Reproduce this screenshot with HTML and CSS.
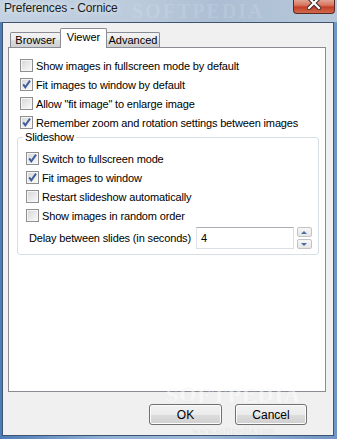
FILE: index.html
```html
<!DOCTYPE html>
<html lang="en">
<head>
  <meta charset="UTF-8" />
  <meta name="viewport" content="width=device-width, initial-scale=1.0" />
  <title>Preferences - Cornice</title>
  <link rel="stylesheet" href="styles.css">
</head>
<body>
  <div class="window">
    <div class="titlebar">
      <span class="title">Preferences - Cornice</span>
      <span class="close">
        <svg width="14" height="10" viewBox="0 0 14 10">
          <path d="M2 -2 L12 8 M12 -2 L2 8" stroke="#3a2a28" stroke-width="4.2" stroke-linecap="square"/>
          <path d="M2 -2 L12 8 M12 -2 L2 8" stroke="#fff" stroke-width="2.2" stroke-linecap="square"/>
        </svg>
      </span>
    </div>

    <div class="client">
      <div class="tabs">
        <div class="tab tab-browser">Browser</div>
        <div class="tab tab-viewer active">Viewer</div>
        <div class="tab tab-advanced">Advanced</div>
      </div>

      <div class="panel">
        <label class="check"><span class="cb"></span>Show images in fullscreen mode by default</label>
        <label class="check"><span class="cb on"></span>Fit images to window by default</label>
        <label class="check"><span class="cb"></span>Allow "fit image" to enlarge image</label>
        <label class="check"><span class="cb on"></span>Remember zoom and rotation settings between images</label>

        <fieldset class="group">
          <legend>Slideshow</legend>
          <label class="check"><span class="cb on"></span>Switch to fullscreen mode</label>
          <label class="check"><span class="cb on"></span>Fit images to window</label>
          <label class="check"><span class="cb"></span>Restart slideshow automatically</label>
          <label class="check"><span class="cb"></span>Show images in random order</label>
          <div class="delay">
            <span class="delay-label">Delay between slides (in seconds)</span>
            <span class="field">4</span>
            <span class="spin">
              <span class="spin-btn"><span class="tri up"></span></span>
              <span class="spin-btn"><span class="tri down"></span></span>
            </span>
          </div>
        </fieldset>
      </div>

      <div class="buttons">
        <button class="btn">OK</button>
        <button class="btn">Cancel</button>
      </div>
    </div>

    <div class="wm wm-top">SOFTPEDIA</div>
    <div class="wm wm-bottom">SOFTPEDIA</div>
    <div class="wm wm-url">www.softpedia.com</div>
  </div>
</body>
</html>
```

FILE: styles.css
```css
html    { -webkit-text-size-adjust: 100%; text-size-adjust: 100%; }
body    { margin: 0; font-family: "Liberation Sans", Arial, sans-serif; font-size: 11px; color: #000; }

.window {
  position: relative; width: 337px; height: 439px; box-sizing: border-box;
  display: flex; flex-direction: column; overflow: hidden;
  background: linear-gradient(to right, #4d7cb6, #8fb0d6 30%, #9db8d6 60%, #6f96c6);
}

/* title bar (glass) */
.titlebar {
  height: 22px; flex: none; display: flex; align-items: flex-start;
  background: linear-gradient(to right, #c3d2e2, #bccbdc 40%, #acbed3 65%, #b7c8da);
}
.title {
  padding-left: 4px; line-height: 16px; font-size: 12px; letter-spacing: -0.15px;
  color: #1b1b1b; text-shadow: 0 0 6px rgba(255,255,255,.9);
}
.close {
  margin-left: auto; margin-right: 2px; width: 40px; height: 13px;
  border: 1px solid #5a2a22; border-top: none; border-radius: 0 0 4px 4px;
  background: linear-gradient(#e3a392 0, #d67560 40%, #c63e27 55%, #cf6a4c 100%);
  display: flex; justify-content: center; align-items: flex-start;
}

/* client area */
.client {
  flex: 1; margin: 0 3px 3px 2px;
  border: 1px solid #3e5470; background: #f0f0f0;
  display: flex; flex-direction: column;
}

.tabs   { display: flex; align-items: flex-end; height: 19px; margin-top: 5px; padding-left: 7px; }
.tab    {
  box-sizing: border-box; height: 15px; line-height: 14px; text-align: center;
  border: 1px solid #898c95; border-bottom: none; border-radius: 2px 2px 0 0;
  background: linear-gradient(#f3f3f3, #ebebeb 50%, #dddddd 51%, #cfcfcf);
}
.tab-browser  { width: 51px; }
.tab-viewer   { width: 47px; margin-left: -1px; }
.tab-advanced { width: 54px; margin-left: -1px; }
.tab.active {
  height: 20px; margin-bottom: -1px; line-height: 16px;
  background: #fff; position: relative; z-index: 1;
}

.panel  {
  box-sizing: border-box; height: 345px; margin: 0 7px 0 5px; padding: 8px 6px 0 8px;
  border: 1px solid #898c95; background: #fff;
}

/* checkboxes */
.check  { display: flex; align-items: center; gap: 3px; height: 19px; padding-left: 3px; letter-spacing: -0.15px; }
.cb     {
  box-sizing: border-box; width: 13px; height: 13px; flex: none;
  border: 1px solid #8f8f8f; box-shadow: inset 0 0 0 1px #f6f6f6;
  background: linear-gradient(135deg, #d3d5d8, #f0f0f0 70%, #fbfbfb);
}
.cb.on  {
  background:
    url("data:image/svg+xml;utf8,<svg xmlns='http://www.w3.org/2000/svg' width='11' height='11'><path d='M2.2 5.4 L4.3 8.4 L9 1.6' fill='none' stroke='%23405c9a' stroke-width='1.9'/></svg>") center / 11px 11px no-repeat,
    linear-gradient(135deg, #d3d5d8, #f0f0f0 70%, #fbfbfb);
}

/* slideshow group */
.group  {
  margin: -1px 0 0 0; padding: 5px 0 5px 8px;
  border: 1px solid #d5dfe5; border-radius: 3px;
}
.group legend { padding: 0 2px; margin-left: -3px; line-height: 13px; letter-spacing: -0.15px; }
.group .check { padding-left: 0; }

.delay  { display: flex; align-items: center; height: 22px; margin-top: 2px; padding-left: 3px; letter-spacing: -0.15px; }
.field  {
  box-sizing: border-box; width: 98px; height: 22px; margin-left: 5px; padding-left: 4px; line-height: 20px;
  border: 1px solid #dbdfe6; border-top-color: #abadb3; border-left-color: #e2e3ea;
  background: #fff;
}
.spin   { display: flex; flex-direction: column; gap: 2px; margin-left: 3px; }
.spin-btn {
  box-sizing: border-box; width: 15px; height: 10px;
  border: 1px solid #c3c3c3; border-radius: 2px;
  background: linear-gradient(#f6f6f6, #e6e6e6);
  display: flex; justify-content: center; align-items: center;
}
.tri    { width: 0; height: 0; border-left: 3px solid transparent; border-right: 3px solid transparent; }
.tri.up   { border-bottom: 3px solid #4b6aa3; }
.tri.down { border-top: 3px solid #4b6aa3; }

/* dialog buttons */
.buttons { display: flex; justify-content: flex-end; gap: 13px; margin-top: 12px; padding-right: 26px; }
.btn    {
  box-sizing: border-box; width: 73px; height: 21px; padding: 0;
  font: inherit; font-size: 12px; color: #000;
  border: 1px solid #707070; border-radius: 3px;
  background: linear-gradient(#f2f2f2, #ebebeb 50%, #dddddd 51%, #cfcfcf);
  box-shadow: inset 0 0 0 1px #fcfcfc;
}
.btn + .btn { width: 72px; }

/* watermark */
.wm     { position: absolute; font-family: "Liberation Serif", serif; font-weight: bold; pointer-events: none; }
.wm-top { left: 132px; top: 0; font-size: 20px; line-height: 22px; letter-spacing: 2px; color: rgba(255,255,255,.12); }
.wm-bottom { left: 166px; top: 382px; font-size: 22px; letter-spacing: 1px;
  color: rgba(255,255,255,.5); -webkit-text-stroke: 0.5px rgba(0,0,0,.06); }
.wm-url { left: 192px; top: 425px; font-size: 10px; line-height: 11px; color: rgba(0,0,0,.06); }
```
